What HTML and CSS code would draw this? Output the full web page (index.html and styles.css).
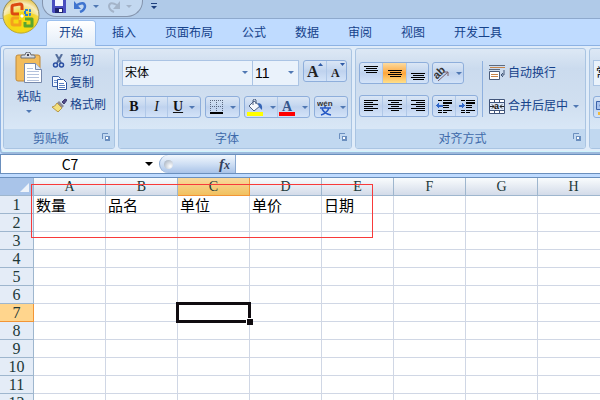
FILE: index.html
```html
<!DOCTYPE html>
<html lang="zh-CN">
<head>
  <meta charset="UTF-8"/>
  <meta name="viewport" content="width=device-width,initial-scale=1.0"/>
  <title>Microsoft Excel</title>
  <link rel="stylesheet" href="styles.css">
</head>
<body>
  <header class="titlebar">
    <button class="orb" aria-label="Office">
      <svg width="38" height="38" viewBox="0 0 38 38">
        <defs>
          <radialGradient id="orbFill" cx="50%" cy="75%" r="75%">
            <stop offset="0" stop-color="#fff21c"/><stop offset=".45" stop-color="#f4d93a"/><stop offset=".75" stop-color="#f6ecc0"/><stop offset="1" stop-color="#e3b92a"/>
          </radialGradient>
        </defs>
        <circle cx="19" cy="19" r="18" fill="url(#orbFill)" stroke="#8f8a5c"/>
        <path d="M1.500 20a17.500 17.500 0 0 0 35 0q-17-8-35 0z" fill="#f2cf00" opacity=".55"/>
        <g fill="none" stroke-linejoin="round">
          <path d="M17 18h-5q-2 0-2-2v-5q0-2 2-2l6-1q2 0 2 2v4" stroke="#dc4a12" stroke-width="3"/>
          <path d="M23 14h5v5h-5z" stroke="#2e7fd0" stroke-width="2" stroke-dasharray="3 1"/>
          <path d="M17 22h-5q-2 0-2 2v3q0 2 2 2h6v-5" stroke="#f5a11c" stroke-width="3"/>
          <path d="M23 23h7v7h-7v-4" stroke="#5aa52f" stroke-width="3"/>
          <path d="M19 19h2v2h-2z" fill="#fff" stroke="#fff"/>
        </g>
      </svg>
    </button>
    <div class="quick">
      <button aria-label="保存">
        <svg width="14" height="14"><path d="M0 0h14v13H1l-1-1z" fill="#4a4fc0"/><path d="M3 0h8v6H3z" fill="#f4f7ff"/><path d="M3 8h8v5H3z" fill="#20246e"/><path d="M7 9h3v3H7z" fill="#fff"/></svg>
      </button>
      <button class="undo" aria-label="撤消">
        <svg width="13" height="13"><path d="M3 5q7-4 8 1 0 4-5 6" fill="none" stroke="#3f74cf" stroke-width="2.500"/><path d="M0 1v8h7z" fill="#3f74cf"/></svg>
        <span class="caret"></span>
      </button>
      <button class="redo" aria-label="恢复">
        <svg width="13" height="13"><path d="M10 5Q3 1 2 6q0 4 5 6" fill="none" stroke="#a4b4c9" stroke-width="2"/><path d="M13 1v8H6z" fill="#a4b4c9"/></svg>
        <span class="caret dim"></span>
      </button>
    </div>
    <button class="customize" aria-label="自定义快速访问工具栏">
      <svg width="6" height="7"><path d="M0 0h6v1H0z M0 3h6L3 6z" fill="#1e3f7c"/></svg>
    </button>
  </header>

  <nav class="tabs">
    <a class="tab active" href="#">开始</a>
    <a class="tab" href="#">插入</a>
    <a class="tab" href="#">页面布局</a>
    <a class="tab" href="#">公式</a>
    <a class="tab" href="#">数据</a>
    <a class="tab" href="#">审阅</a>
    <a class="tab" href="#">视图</a>
    <a class="tab" href="#">开发工具</a>
  </nav>

  <div class="ribbon">
    <section class="group">
      <div class="group-body clipboard">
        <button class="paste">
          <svg width="28" height="32" viewBox="0 0 28 32">
            <rect x="1" y="3" width="24" height="26" rx="2" fill="#f2bc5c" stroke="#c08a3c"/>
            <path d="M6 6V4q0-1 2-1h2q0-3 3-3t3 3h2q2 0 2 1v2z" fill="#d8dce2" stroke="#69707c"/>
            <path d="M12 2h2v2h-2z" fill="#445"/>
            <path d="M9.500 11.500h11l6 6v13h-17z" fill="#fff" stroke="#7688ab"/>
            <path d="M20.500 11.500v6h6" fill="#dfe8f6" stroke="#7688ab"/>
            <path d="M12 16.500h6M12 19.500h12M12 22.500h12M12 25.500h12M12 28.500h12" stroke="#b4c2dc"/>
          </svg>
          <span>粘贴</span>
          <span class="caret"></span>
        </button>
        <div class="commands">
          <button class="command">
            <svg width="15" height="14"><path d="M4 0l5 9M10 0L5 9" stroke="#566f9c" stroke-width="2"/><circle cx="3.500" cy="11" r="2" fill="none" stroke="#2a4fa3" stroke-width="1.500"/><circle cx="9.500" cy="11" r="2" fill="none" stroke="#2a4fa3" stroke-width="1.500"/></svg>
            剪切
          </button>
          <button class="command">
            <svg width="15" height="14"><path d="M.5.500h6l2 2v8h-8z" fill="#eef5ff" stroke="#3c62a8"/><path d="M2 4.500h4M2 6.500h4" stroke="#6f92cb"/><path d="M5.500 3.500h6l3 3v7h-9z" fill="#fff" stroke="#2c54a0"/><path d="M7 7.500h5M7 9.500h6M7 11.500h6" stroke="#5b82c4"/></svg>
            复制
          </button>
          <button class="command">
            <svg width="15" height="14"><path d="M10 4l3-3 2 1-3 4z" fill="#4f4a86" stroke="#3d3970"/><path d="M7 3l5 5-2 2-5-5z" fill="#8e8b96"/><path d="M5 5l5 5-4 4-6-5q3 0 5-4z" fill="#f3df7b" stroke="#b6974a"/></svg>
            格式刷
          </button>
        </div>
      </div>
      <footer class="group-name">剪贴板
        <button class="launcher" aria-label="剪贴板选项"><svg width="8" height="8"><path d="M.5 6V.5H6" fill="none" stroke="#6b8fbf"/><path d="M3 3h5v5H3z" fill="#6b8fbf"/><path d="M4 4h2v2H4z" fill="#fff"/></svg></button>
      </footer>
    </section>

    <section class="group">
      <div class="group-body font-tools">
        <div class="row">
          <div class="combos">
            <label class="combo family"><select aria-label="字体"><option>宋体</option></select><span class="caret"></span></label>
            <label class="combo size"><select aria-label="字号"><option>11</option></select><span class="caret"></span></label>
          </div>
          <div class="buttons">
            <button class="w22" aria-label="增大字号"><svg width="18" height="18"><text x="1" y="15" class="glyph big">A</text><path d="M12 4h5l-2.500-3z" fill="#2f5aa5"/></svg></button>
            <button class="w20" aria-label="减小字号"><svg width="18" height="18"><text x="3" y="15" class="glyph small">A</text><path d="M12 1h5l-2.500 3z" fill="#2f5aa5"/></svg></button>
          </div>
        </div>
        <div class="row">
          <div class="buttons">
            <button class="w22 letter bold">B</button>
            <button class="w22 letter italic">I</button>
            <button class="split w33"><span class="letter underline">U</span><span class="caret"></span></button>
          </div>
          <div class="buttons">
            <button class="split w33" aria-label="边框">
              <svg width="14" height="14" shape-rendering="crispEdges"><path d="M0 .5h13M0 6.500h13M.5 0v12M6.500 0v12M12.500 0v12" stroke="#59677f" stroke-dasharray="1 1"/><path d="M0 12h13v2H0z" fill="#000"/></svg>
              <span class="caret"></span>
            </button>
          </div>
          <div class="buttons">
            <button class="split w32" aria-label="填充颜色">
              <svg width="17" height="17"><path d="M7 2l6 5-6 5-5-5z" fill="#f5f8fc" stroke="#4b5f80"/><path d="M6 6V1q2-2 3 0v4" fill="none" stroke="#4b5f80"/><path d="M11 4q5 0 4 7l-3-3z" fill="#3564b5"/><path d="M0 13h16v4H0z" fill="#ff0"/></svg>
              <span class="caret"></span>
            </button>
            <button class="split w32" aria-label="字体颜色">
              <svg width="17" height="17"><text x="3" y="12" class="glyph color">A</text><path d="M0 13h16v4H0z" fill="#f00"/></svg>
              <span class="caret"></span>
            </button>
          </div>
          <div class="buttons">
            <button class="split w32" aria-label="拼音指南">
              <svg width="17" height="17"><text x="0" y="7" class="wen">wén</text><path d="M3 9h11M8 7v2M12 9q-2 5-8 7M5 10q3 5 9 6" fill="none" stroke="#2457c5" stroke-width="1.500"/></svg>
              <span class="caret"></span>
            </button>
          </div>
        </div>
      </div>
      <footer class="group-name">字体
        <button class="launcher" aria-label="字体选项"><svg width="8" height="8"><path d="M.5 6V.5H6" fill="none" stroke="#6b8fbf"/><path d="M3 3h5v5H3z" fill="#6b8fbf"/><path d="M4 4h2v2H4z" fill="#fff"/></svg></button>
      </footer>
    </section>

    <section class="group">
      <div class="group-body align-tools">
        <div class="align-rows">
          <div class="row">
            <div class="buttons">
              <button class="w22" aria-label="顶端对齐"><svg width="14" height="14" shape-rendering="crispEdges"><path d="M0 .5h14M2 2.500h11M0 4.500h14M2 6.500h11" stroke="#000"/></svg></button>
              <button class="w24 on" aria-label="垂直居中"><svg width="14" height="14" shape-rendering="crispEdges"><path d="M0 4.500h14M2 6.500h11M0 8.500h14M2 10.500h11" stroke="#000"/></svg></button>
              <button class="w22" aria-label="底端对齐"><svg width="14" height="14" shape-rendering="crispEdges"><path d="M0 7.500h14M2 9.500h11M0 11.500h14M2 13.500h11" stroke="#000"/></svg></button>
            </div>
            <div class="buttons">
              <button class="split w30" aria-label="方向">
                <svg width="16" height="18"><text x="1" y="15" class="ab" transform="rotate(-45 3 13)">ab</text><path d="M4 17l10-9M14 12V8h-4" fill="none" stroke="#7a5f68"/></svg>
                <span class="caret"></span>
              </button>
            </div>
          </div>
          <div class="row">
            <div class="buttons">
              <button class="w22" aria-label="文本左对齐"><svg width="14" height="12" shape-rendering="crispEdges"><path d="M0 .5h14M0 2.500h9M0 4.500h14M0 6.500h9M0 8.500h14M0 10.500h9" stroke="#000"/></svg></button>
              <button class="w24" aria-label="居中"><svg width="14" height="12" shape-rendering="crispEdges"><path d="M0 .5h14M3 2.500h8M0 4.500h14M3 6.500h8M0 8.500h14M3 10.500h8" stroke="#000"/></svg></button>
              <button class="w22" aria-label="文本右对齐"><svg width="14" height="12" shape-rendering="crispEdges"><path d="M0 .5h14M5 2.500h9M0 4.500h14M5 6.500h9M0 8.500h14M5 10.500h9" stroke="#000"/></svg></button>
            </div>
            <div class="buttons">
              <button class="w22" aria-label="减少缩进量"><svg width="16" height="15" shape-rendering="crispEdges"><path d="M2 1.500h4M7 1.500h9M2 11.500h4M7 11.500h9M7 8.500h6M7 13.500h4M2 13.500h4" stroke="#000"/><path d="M7 3h9v2H7zM7 6h6v1H7z"/><path d="M0 6.500l3-3v2h4v2H3v2z" fill="#2f66c8"/></svg></button>
              <button class="w22" aria-label="增加缩进量"><svg width="16" height="15" shape-rendering="crispEdges"><path d="M2 1.500h4M7 1.500h9M2 11.500h4M7 11.500h9M7 8.500h6M7 13.500h4M2 13.500h4" stroke="#000"/><path d="M7 3h9v2H7zM7 6h6v1H7z"/><path d="M6 6.500l-3-3v2H0v2h3v2z" fill="#2f66c8"/></svg></button>
            </div>
          </div>
        </div>
        <div class="wrap-merge">
          <button class="command">
            <svg width="16" height="16"><path d="M0 .5h16M0 4.500h11" stroke="#5d6a7f"/><path d="M1 2.500h15" stroke="#c8854a"/><path d="M.5 6.500h10v8H.5z" fill="#fff" stroke="#4a5b78"/><path d="M2 9.500h7M2 11.500h7" stroke="#c8854a"/><path d="M15 5v5h-3M14 8l-2 2 2 2" fill="none" stroke="#445878"/></svg>
            自动换行
          </button>
          <button class="command">
            <svg width="16" height="15"><path d="M.5.500h15v14H.5z" fill="#fff" stroke="#41557a"/><path d="M0 3.500h16M0 11.500h16M5.500 0v4M10.500 0v4M5.500 11v4M10.500 11v4" stroke="#41557a"/><path d="M1 4h14v7H1z" fill="#dce8f8"/><path d="M1 7.500h4M11 7.500h4M3 5.500l2 2-2 2M13 5.500l-2 2 2 2" fill="none" stroke="#222"/><text x="5" y="10" class="merge">a</text></svg>
            合并后居中
            <span class="caret"></span>
          </button>
        </div>
      </div>
      <footer class="group-name">对齐方式
        <button class="launcher" aria-label="对齐选项"><svg width="8" height="8"><path d="M.5 6V.5H6" fill="none" stroke="#6b8fbf"/><path d="M3 3h5v5H3z" fill="#6b8fbf"/><path d="M4 4h2v2H4z" fill="#fff"/></svg></button>
      </footer>
    </section>

    <section class="group">
      <div class="group-body font-tools">
        <label class="combo format"><select aria-label="数字格式"><option>常规</option></select></label>
        <div class="buttons">
          <button class="split w32" aria-label="会计数字格式"><svg width="17" height="17"><path d="M.5 2.500h14v8H.5z" fill="#a9c3ee" stroke="#3c62a8"/><circle cx="7" cy="6.500" r="3" fill="#fff" stroke="#3c62a8"/><path d="M2 13h12v3H2z" fill="#f0b93c"/></svg><span class="caret"></span></button>
        </div>
      </div>
      <footer class="group-name"></footer>
    </section>
  </div>

  <div class="formula-bar">
    <div class="name-box">
      <input type="text" value="C7" aria-label="名称框">
      <button aria-label="名称列表"><svg width="8" height="4"><path d="M0 0h8L4 4z"/></svg></button>
    </div>
    <div class="fx-area">
      <span class="knob"></span>
      <button class="fx" aria-label="插入函数">f<small>x</small></button>
    </div>
    <input class="formula" type="text" aria-label="编辑栏">
  </div>

  <main class="sheet">
    <table class="grid">
      <thead>
        <tr><th class="corner"><svg width="10" height="9"><path d="M9 0v9H0z" fill="#eef3fa"/></svg></th><th>A</th><th>B</th><th class="current">C</th><th>D</th><th>E</th><th>F</th><th>G</th><th>H</th></tr>
      </thead>
      <tbody>
        <tr><th>1</th><td>数量</td><td>品名</td><td>单位</td><td>单价</td><td>日期</td><td></td><td></td><td></td></tr>
        <tr><th>2</th><td></td><td></td><td></td><td></td><td></td><td></td><td></td><td></td></tr>
        <tr><th>3</th><td></td><td></td><td></td><td></td><td></td><td></td><td></td><td></td></tr>
        <tr><th>4</th><td></td><td></td><td></td><td></td><td></td><td></td><td></td><td></td></tr>
        <tr><th>5</th><td></td><td></td><td></td><td></td><td></td><td></td><td></td><td></td></tr>
        <tr><th>6</th><td></td><td></td><td></td><td></td><td></td><td></td><td></td><td></td></tr>
        <tr><th class="current">7</th><td></td><td></td><td class="selected"></td><td></td><td></td><td></td><td></td><td></td></tr>
        <tr><th>8</th><td></td><td></td><td></td><td></td><td></td><td></td><td></td><td></td></tr>
        <tr><th>9</th><td></td><td></td><td></td><td></td><td></td><td></td><td></td><td></td></tr>
        <tr><th>10</th><td></td><td></td><td></td><td></td><td></td><td></td><td></td><td></td></tr>
        <tr><th>11</th><td></td><td></td><td></td><td></td><td></td><td></td><td></td><td></td></tr>
        <tr><th>12</th><td></td><td></td><td></td><td></td><td></td><td></td><td></td><td></td></tr>
      </tbody>
    </table>
    <div class="marker"></div>
  </main>
</body>
</html>
```

FILE: styles.css
```css
* { box-sizing:border-box; }
body { margin:0; height:100vh; overflow:hidden; display:flex; flex-direction:column; background:#bfdbff; color:#15428b; font:12px/16px "Liberation Sans", "Noto Sans CJK SC", sans-serif; }
button, input, select { font:inherit; color:inherit; margin:0; padding:0; border:0; background:none; }
svg { display:block; flex:none; }
a { color:inherit; text-decoration:none; }

.caret { flex:none; width:0; height:0; border:3px solid transparent; border-top-color:#5078b3; border-bottom:0; }
.caret.dim { border-top-color:#a4b4c9; }

/* title bar */
.titlebar { position:relative; flex:none; height:19px; display:flex; align-items:flex-start; padding-left:42px; background:#b0cae8; border-bottom:1px solid #8ea9cd; }
.orb { position:absolute; left:2px; top:-4px; z-index:2; }
.quick { display:flex; align-items:flex-start; gap:8px; height:17px; padding:0 10px 0 9px; background:#c3d8f0; border:1px solid #8494ad; border-top:0; border-radius:0 0 16px 14px; }
.quick button { display:flex; align-items:center; gap:6px; height:13px; }
.customize { padding:3px 8px; }

/* tabs */
.tabs { flex:none; display:flex; gap:5px; height:26px; padding:2px 0 0 47px; }
.tab { padding:3px 12px; line-height:18px; border-radius:3px 3px 0 0; }
.tab.active { position:relative; height:25px; background:linear-gradient(#fff, #e3edf8); box-shadow:0 0 0 1px #9cc0ee; clip-path:inset(-1px -1px 0 -1px); z-index:1; }

/* ribbon */
.ribbon { flex:none; display:flex; gap:3px; padding:2px 0 2px 2px; border:1px solid #8db2e3; border-bottom:1px solid #d0f4fc; border-right:0; border-radius:4px 0 0 4px; background:#e0ecf9; box-shadow:0 2px #9db9dc; overflow:hidden; }
.group { flex:none; display:flex; flex-direction:column; border:1px solid #a9c4e2; border-radius:3px; overflow:hidden; background:linear-gradient(#dde8f5, #cbdbee 20%, #d0dff0 55%, #dfedfb); }
.group-body { height:80px; }
.group-name { position:relative; height:19px; text-align:center; line-height:20px; padding-right:16px; background:#c1d8f0; color:#3e6aaa; }
.launcher { position:absolute; right:4px; top:4px; }

.clipboard { display:flex; align-items:flex-start; gap:7px; padding:3px 8px 0 9px; }
.paste { display:flex; flex-direction:column; align-items:center; width:32px; }
.paste span { margin-top:5px; }
.commands { display:flex; flex-direction:column; gap:6px; padding-top:1px; }
.command { display:flex; align-items:center; gap:3px; height:16px; white-space:nowrap; }
.command .caret { margin-left:2px; }

.row { display:flex; align-items:flex-start; gap:4px; }
.font-tools { display:flex; flex-direction:column; gap:10px; padding:11px 3px 0 3px; }
.combos { display:flex; }
.combo { position:relative; display:block; height:26px; border:1px solid #abc4e4; background:#eaf2fb; color:#000; }
.combo + .combo { border-left:0; }
.combo select { display:block; width:100%; height:24px; padding-left:2px; appearance:none; }
.combo .caret { position:absolute; right:4px; top:10px; }
.family { width:131px; }
.size { width:46px; font-size:14px; }
.format { width:80px; }

.buttons { display:flex; height:22px; border:1px solid #8eaedb; border-radius:3px; background:linear-gradient(#dae6f5, #c6d8f0 40%, #bfd2ee 50%, #d3e3f8); }
.buttons button { display:flex; align-items:center; justify-content:center; height:20px; }
.buttons button + button { border-left:1px solid #b0c8e8; }
.buttons .on { background:linear-gradient(#fcdba0, #fdb252 40%, #fda53a 50%, #ffe08a); }
.buttons .split { gap:6px; }
.w20 { width:20px; }
.w22 { width:22px; }
.w24 { width:24px; }
.w30 { width:30px; }
.w32 { width:32px; }
.w33 { width:33px; }
.letter, .buttons .letter { color:#111; font:bold 14px/16px "Liberation Serif", serif; }
.buttons .italic { font-style:italic; font-weight:normal; }
.underline { text-decoration:underline; }
.glyph { font-family:"Liberation Serif", serif; font-weight:bold; fill:#222; }
.big { font-size:16px; }
.small { font-size:12px; }
.color { font-size:14px; fill:#35558c; }
.wen { font:bold 8px "Liberation Sans", sans-serif; fill:#333; }
.ab { font:bold 11px "Liberation Sans", sans-serif; fill:#333; }
.merge { font:bold 9px "Liberation Sans", sans-serif; fill:#111; }

.align-tools { display:flex; align-items:flex-start; gap:4px; padding:12px 6px 0 3px; }
.align-rows { display:flex; flex-direction:column; gap:11px; padding-top:1px; }
.wrap-merge { display:flex; flex-direction:column; gap:17px; height:56px; padding:4px 0 0 6px; border-left:1px solid #8eb0de; }
.align-rows .row { gap:3px; }

/* formula bar */
.formula-bar { flex:none; display:flex; margin-top:2px; height:20px; border-top:1px solid #6a8fbd; border-bottom:1px solid #6a8fbd; background:#fff; }
.name-box { display:flex; align-items:center; width:159px; padding-right:6px; border-left:1px solid #6a8fbd; color:#000; }
.name-box input { flex:1; min-width:0; padding-right:6px; text-align:center; font:14px/18px "Noto Sans CJK SC", sans-serif; }
.fx-area { display:flex; align-items:center; justify-content:space-between; width:77px; padding:0 5px 0 4px; border:1px solid #8aa8d0; border-width:0 1px; border-radius:10px 0 0 10px; background:linear-gradient(#f2f7fd, #cfdff4 50%, #a9c3e8); }
.knob { width:9px; height:9px; border-radius:50%; background:radial-gradient(circle at 70% 70%, #fff, #9aa7b8); }
.fx { color:#33415c; font:italic bold 15px/16px "Liberation Serif", serif; }
.fx small { font-size:12px; }
.formula { flex:1; min-width:0; padding:0 4px; color:#000; }

/* worksheet */
.sheet { position:relative; flex:1; min-height:0; overflow:hidden; margin-top:3px; border-top:1px solid #6a8fbd; background:#fff; }
.grid { table-layout:fixed; width:610px; border-spacing:0; color:#000; }
.grid th, .grid td { position:relative; height:18px; padding:0; line-height:17px; border-right:1px solid #d0d7e5; border-bottom:1px solid #d0d7e5; }
.grid th { width:72px; color:#203838; font:14px/17px "Liberation Serif", serif; border-color:#9eb6ce; background:#e4ecf7; }
.grid thead th { background:linear-gradient(#f9fcfd, #d3dbe9); }
.grid th:first-child { width:34px; font-size:16px; }
.grid thead .corner { background:#a9c4e9; }
.corner svg { margin:2px 0 0 20px; }
.grid td { padding-left:2px; font:15px/17px "Noto Sans CJK SC", sans-serif; }
.grid thead .current { background:linear-gradient(#f9d99f, #f1c15f); border-color:#f29536; }
.grid tbody .current { background:#ffd58d; border-color:#f29536; }
.selected::before { content:""; position:absolute; inset:-2px; border:3px solid #100c10; z-index:1; }
.selected::after { content:""; position:absolute; right:-4px; bottom:-4px; width:6px; height:6px; border:1px solid #fff; border-width:1px 0 0 1px; background:#100c10; z-index:2; }

/* red frame round the heading cells */
.marker { position:absolute; left:31px; top:6px; width:342px; height:54px; border:1px solid #f83a3a; }
```
